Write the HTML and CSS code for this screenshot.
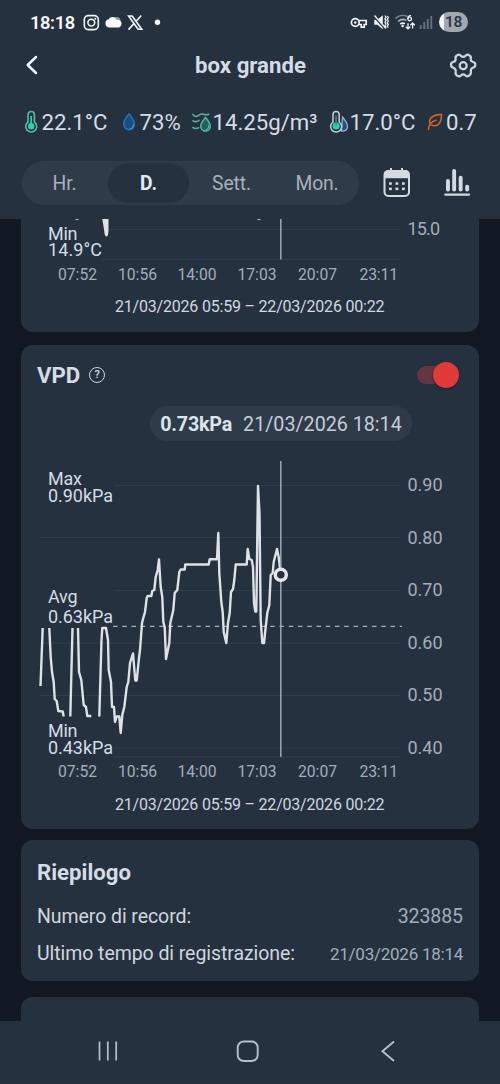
FILE: index.html
```html
<!DOCTYPE html>
<html lang="it">
<head>
<meta charset="utf-8">
<title>box grande</title>
<link rel="stylesheet" href="styles.css">
</head>
<body>
<div class="screen">
  <header class="top">
    <div class="status">
      <span class="clock">18:18</span>
      <svg class="status-left" width="82" height="20" viewBox="82 12 82 20">
        <g fill="none" stroke="#f1f4f8" stroke-width="1.6"><rect x="84.3" y="15.6" width="14" height="14" rx="4"/><circle cx="91.3" cy="22.6" r="3.4"/></g>
        <circle cx="95.3" cy="18.7" r="1" fill="#f1f4f8"/>
        <circle cx="116.5" cy="21" r="4" fill="#939ba6"/>
        <path d="M109 27.6a4.3 4.3 0 0 1-.4-8.400a4.600 4.600 0 0 1 8.200.7a3.900 3.900 0 1 1 .7 7.700z" fill="#f7f9fb"/>
        <g fill="none" stroke="#f1f4f8" stroke-width="1.6"><path d="M128.600 16h3.600l9.500 13.300h-3.600z"/><path d="M141.300 15.500l-5.600 6.200M133.900 23.600l-5.400 6"/></g>
        <circle cx="157.500" cy="22.300" r="2.700" fill="#f7f9fb"/>
      </svg>
      <svg class="status-right" width="86" height="22" viewBox="348 11 86 22">
        <g fill="none" stroke="#f1f4f8" stroke-width="1.700"><circle cx="355.300" cy="22.500" r="3.900"/><path d="M359 20.500h7.200v4h-2v2.600h-3v-2.600h-2.200"/></g><circle cx="355.300" cy="22.500" r="1.300" fill="#f1f4f8"/>
        <path d="M374.300 19.800h3.200l5.300-4.600v14l-5.300-4.400h-3.200z" fill="#f1f4f8"/><path d="M373.500 15.500l12 13.500" stroke="#263140" stroke-width="2.500"/><path d="M374.500 15.500l11.500 13" stroke="#f1f4f8" stroke-width="1.300"/>
        <path d="M384.800 15.500l1.300 1.700-1.300 1.700 1.300 1.700-1.300 1.700 1.300 1.700-1.300 1.700 1.300 2M387.200 16l1.200 1.600-1.200 1.700 1.200 1.700-1.200 1.700 1.200 1.700-1.200 1.700 1 1.600" fill="none" stroke="#f1f4f8" stroke-width="1.200"/>
        <g fill="none" stroke-width="1.600"><path d="M395.500 18.500c3.500-3.400 8.500-3.800 12.200-1.800" stroke="#778190"/><path d="M398 21.500c2.700-2.300 5.700-2.500 8.300-1.300" stroke="#aab2bd"/><path d="M400.300 24c1.400-1 3-1.200 4.600-.3" stroke="#f1f4f8"/></g>
        <circle cx="402.600" cy="26" r="1.300" fill="#f1f4f8"/>
        <g fill="none" stroke="#f1f4f8" stroke-width="1.300"><circle cx="409.700" cy="19" r="1.800"/><path d="M411 15.700c-2-.4-3.100 1-3.100 3.300M408 23.300v5.500M405.800 26.700l2.200 2.200 2.200-2.200M412.600 28.500V23M410.400 25.200l2.200-2.200 2.200 2.200"/></g>
        <g fill="#647080"><rect x="419.800" y="25" width="1.900" height="4"/><rect x="423.300" y="22" width="1.900" height="7"/><rect x="426.800" y="19" width="1.900" height="10"/><rect x="430.300" y="16" width="1.900" height="13"/></g>
      </svg>
      <span class="battery">18</span>
    </div>

    <div class="titlebar">
      <svg class="back" width="20" height="26" viewBox="22 53 20 26"><path d="M36 57l-8.300 8 8.300 8" fill="none" stroke="#f3f6fa" stroke-width="2.500" stroke-linecap="round" stroke-linejoin="round"/></svg>
      <h1 class="title">box grande</h1>
      <svg class="gear" width="30" height="30" viewBox="448 51 30 30">
        <path d="M456.900 54.800Q459.100 53 460.900 55.100Q463.200 57 465.500 55.100Q467.300 53 469.400 54.800Q471.400 55.800 470.700 58Q470.500 60.700 473 61.300Q475.500 61.800 475.300 64Q475.300 66.500 472.900 67Q470.300 68 470.900 70.900Q471.500 73.500 468.900 75Q466.700 76.500 465.200 74.500Q463.200 72.700 461.200 74.500Q459.400 76.500 457.300 75Q455 73.700 455.700 71Q456.100 68 453.300 67Q450.900 66.500 451 64Q450.900 61.800 453.300 61.300Q456 60.700 455.600 58Q455 55.800 456.900 54.800Z" fill="none" stroke="#cdd5df" stroke-width="2.200" stroke-linejoin="round" transform="translate(0 .7)"/>
        <circle cx="463.200" cy="65.700" r="3.500" fill="none" stroke="#cdd5df" stroke-width="2.200"/>
      </svg>
    </div>

    <div class="metrics">
      <div class="metric m-temp">
        <svg width="16" height="24" viewBox="23 109 16 24"><path d="M28 121v-7.300a3.200 3.200 0 0 1 6.400 0v7.300a5.500 5.500 0 1 1-6.400 0z" fill="none" stroke="#5bb7a4" stroke-width="1.600"/><circle cx="31.200" cy="125.200" r="3.200" fill="#26d3aa"/><path d="M31.200 115v10" stroke="#26d3aa" stroke-width="1.700"/></svg>
        <span>22.1°C</span>
      </div>
      <div class="metric m-hum">
        <svg width="16" height="24" viewBox="121 109 16 24"><path d="M129 113c2.800 3.600 5.300 6.600 5.300 10a5.300 5.600 0 0 1-10.600 0c0-3.400 2.500-6.400 5.300-10z" fill="#1c4d7e" stroke="#2272ba" stroke-width="1.600"/><path d="M130 128.200q3.500-.8 3.700-4.800" fill="none" stroke="#43a0ee"/></svg>
        <span>73%</span>
      </div>
      <div class="metric m-abs">
        <svg width="20" height="24" viewBox="192 109 20 24"><g fill="none" stroke="#58ad9b" stroke-width="1.600" stroke-linecap="round"><path d="M193 113.500c3 4.500 5 .5 8-.2c3-.9 4.500 1.700 7.700-.1M193 119.800c2.800 2 4.500.5 6-.5M193 126.500c2.800 2 4 .8 5.500.2"/><path d="M205.500 116.500c2.500 3.200 4.800 5.600 4.800 8.700a4.800 4.900 0 0 1-9.600 0c0-3.100 2.300-5.500 4.800-8.700z" fill="#255e60"/></g><path d="M205.700 129q3.200-.5 3.300-5" stroke="#2fddb2" fill="none"/></svg>
        <span>14.25g/m³</span>
      </div>
      <div class="metric m-dew">
        <svg width="20" height="24" viewBox="329 109 20 24"><path d="M342.500 116c3 3.600 5 6.200 5 9.200c0 3.500-2.500 5-6 5z" fill="#294e82" stroke="#9fb5ce" stroke-width="1.200"/><path d="M333 121v-7.300a3.100 3.100 0 0 1 6.200 0v7.300a5.500 5.500 0 1 1-6.200 0z" fill="#263140" stroke="#c4d0d8" stroke-width="1.500"/><circle cx="336.100" cy="125" r="3.600" fill="#26d3aa"/><path d="M336.100 114.500v10" stroke="#438f86" stroke-width="1.500"/></svg>
        <span>17.0°C</span>
      </div>
      <div class="metric m-vpd">
        <svg width="18" height="24" viewBox="428 109 18 24"><path d="M429.500 128.500c.3-5.300 2.800-8 7.500-9.300M431.500 124c-3-6 2-10.700 11-10.400c.1 7.500-3 12.700-9.600 10.700" fill="none" stroke="#cd632b" stroke-width="1.600" stroke-linecap="round"/></svg>
        <span>0.7</span>
      </div>
    </div>

    <div class="controls">
      <nav class="tabs">
        <span class="tab">Hr.</span><span class="tab active">D.</span><span class="tab">Sett.</span><span class="tab">Mon.</span>
      </nav>
      <svg class="cal" width="30" height="32" viewBox="382 167 30 32"><path d="M391 168v3M402 168v3" stroke="#d4dae2" stroke-width="2"/><rect x="384.500" y="171" width="24.500" height="25" rx="4" fill="none" stroke="#d4dae2" stroke-width="2"/><path d="M384 178.300v-4a4 4 0 0 1 4-4h17.500a4 4 0 0 1 4 4v4z" fill="#d4dae2"/><g fill="#d4dae2"><rect x="389" y="182.300" width="2.800" height="2.500"/><rect x="395.500" y="182.300" width="2.800" height="2.500"/><rect x="402" y="182.300" width="2.800" height="2.500"/><rect x="389" y="187.600" width="2.800" height="2.500"/><rect x="395.500" y="187.600" width="2.800" height="2.500"/><rect x="402" y="187.600" width="2.800" height="2.500"/></g></svg>
      <svg class="bars" width="30" height="32" viewBox="442 167 30 32"><g fill="#d4dae2"><rect x="446" y="179" width="3.900" height="12.500" rx="1.900"/><rect x="452.200" y="169" width="3.900" height="22.500" rx="1.900"/><rect x="458.700" y="175.800" width="3.900" height="15.700" rx="1.900"/><rect x="465.200" y="184.800" width="3.900" height="6.700" rx="1.900"/><rect x="444.200" y="193.400" width="26" height="2.300" rx="1.100"/></g></svg>
    </div>
  </header>

  <main class="content">
    <section class="card card-prev">
      <svg class="chart" width="458" height="113" viewBox="21 219 458 113">
        <path class="grid" d="M106 229.500H400M102 259.500H400"/>
        <path d="M102.300 219h6.200v10q0 7.500-2 7.500t-2.300-6z" fill="#dfe3e8"/>
        <path d="M75.500 219.300h3M257.500 219.300h3" stroke="#dfe3e8"/>
        <path class="cursor" d="M280.800 219v40.500"/>
        <g class="stat"><text x="48" y="239.500" textLength="29.500">Min</text><text x="48" y="256" textLength="54">14.9°C</text></g>
        <text class="ylab" x="407.500" y="235.200" textLength="32.500">15.0</text>
        <g class="xlab"><text x="58" y="279.500" textLength="39">07:52</text><text x="118" y="279.500" textLength="39">10:56</text><text x="177.500" y="279.500" textLength="39">14:00</text><text x="237.500" y="279.500" textLength="39">17:03</text><text x="298" y="279.500" textLength="39">20:07</text><text x="359.500" y="279.500" textLength="38.500">23:11</text></g>
        <text class="range" x="115" y="312" textLength="269.500">21/03/2026 05:59 – 22/03/2026 00:22</text>
      </svg>
    </section>

    <section class="card card-vpd">
      <div class="card-head">
        <h2 class="card-title">VPD</h2>
        <span class="help">?</span>
        <span class="switch"><span class="knob"></span></span>
      </div>
      <div class="reading"><b>0.73kPa</b><span>21/03/2026 18:14</span></div>
      <svg class="chart" width="458" height="388" viewBox="21 441 458 388">
        <path class="grid" d="M114 485.500H400M40 537.500H400M115 590.500H400M40 643H400M40 695.500H400M114 748H400M114 757H400"/>
        <path class="average" d="M113 626.300H402"/>
        <path class="series" d="M40.500 686L42.700 628M49.300 628L50.700 657 52 672 53.700 682 54.700 699 56.700 701 58.300 711 62.700 711.500 63.700 716.500M70.300 716.500L72.500 628M78 628L79 672 81.300 680 83 698 83.700 705 86 707 87.300 716 91.300 716M99.300 716.500L101.500 640 102.300 628H106L108 640 108.700 670 111 682 112 707 114 707 115 722 116.700 716.500H119.300L120.700 733 122.300 715 124.300 707 126.700 687 128.300 682 130 663 133 653.500 135.300 680.500H136.700L139 658 140 650 142 623 143.300 618 145 612 146.700 598 147.700 596H151.300L152.300 591 154.300 590 155.700 577 157.700 570 159 559.500 160.700 587 162.300 597 163.300 622 164.700 627 166 659 169.300 643 170.300 623 173.300 610 174.700 593 177.300 590 179.300 572 180.700 569.500H184.700L185.300 564.500H208.700L209.700 559.300H217L218.300 533 219.300 573 221.300 602 222.700 612 223.700 632 226.300 643 228 623 229.700 613 231 592 233 589 234.300 580 235.700 564.500H246.700L247.700 549 249.300 559 251.700 560 253 567 254 603 255.300 611.500H256.300L258 486 259.500 513 260.700 620 262.300 643H264L265.700 627 267.300 613 269.300 605 270.700 575 272.700 573 273.700 562 277 549 278.700 557 280.500 573"/>
        <path class="cursor" d="M280.800 461V757"/>
        <circle cx="280.800" cy="574.800" r="5.500" fill="#263140" stroke="#e4e7ec" stroke-width="3.500"/>
        <g class="stat"><text x="48" y="485" textLength="34">Max</text><text x="48" y="501.500" textLength="65">0.90kPa</text><text x="48" y="603" textLength="29.500">Avg</text><text x="48" y="622.500" textLength="65">0.63kPa</text><text x="48" y="736.500" textLength="29.500">Min</text><text x="48" y="753.500" textLength="65">0.43kPa</text></g>
        <g class="ylab"><text x="407.500" y="491" textLength="35">0.90</text><text x="407.500" y="543.500" textLength="35">0.80</text><text x="407.500" y="596" textLength="35">0.70</text><text x="407.500" y="648.700" textLength="35">0.60</text><text x="407.500" y="701" textLength="35">0.50</text><text x="407.500" y="753.800" textLength="35">0.40</text></g>
        <g class="xlab"><text x="58" y="777" textLength="39">07:52</text><text x="118" y="777" textLength="39">10:56</text><text x="177.500" y="777" textLength="39">14:00</text><text x="237.500" y="777" textLength="39">17:03</text><text x="298" y="777" textLength="39">20:07</text><text x="359.500" y="777" textLength="38.500">23:11</text></g>
        <text class="range" x="115" y="809.500" textLength="269.500">21/03/2026 05:59 – 22/03/2026 00:22</text>
      </svg>
    </section>

    <section class="card card-summary">
      <h2 class="card-title">Riepilogo</h2>
      <div class="row"><span>Numero di record:</span><span class="value">323885</span></div>
      <div class="row"><span>Ultimo tempo di registrazione:</span><span class="value small">21/03/2026 18:14</span></div>
    </section>

    <section class="card card-next"></section>
  </main>

  <footer class="navbar">
    <svg width="24" height="24" viewBox="96 1039 24 24"><path d="M99.500 1041.500v19M107.800 1041.500v19M116.200 1041.500v19" stroke="#b6bfcd" stroke-width="1.700"/></svg>
    <svg width="26" height="26" viewBox="235 1038 26 26"><rect x="237.700" y="1041.500" width="20" height="19.500" rx="6" fill="none" stroke="#b6bfcd" stroke-width="1.900"/></svg>
    <svg width="24" height="24" viewBox="376 1039 24 24"><path d="M394 1041.500l-11.500 9.700 11.500 9.700" fill="none" stroke="#b6bfcd" stroke-width="1.900"/></svg>
  </footer>
</div>
</body>
</html>
```
FILE: styles.css
```css
* { box-sizing: border-box; }
body { margin: 0; background: #111823; font-family: Roboto, "Liberation Sans", sans-serif; color: #d5dce5; }
h1, h2 { margin: 0; font-weight: 700; }
svg { display: block; flex: none; }
.screen { width: 500px; height: 1084px; display: flex; flex-direction: column; overflow: hidden; }

.top { height: 219px; flex: none; background: #263140; }
.status { height: 44px; display: flex; align-items: center; padding: 0 32px 0 30px; }
.clock { width: 52px; font-size: 18.300px; font-weight: 600; letter-spacing: -0.400px; color: #f7f9fb; white-space: nowrap; }
.status-right { margin-left: auto; }
.battery { width: 29px; height: 20px; margin-left: 5px; border-radius: 10px; background: linear-gradient(90deg, #f1f3f5 0 5px, #a2a8b1 5px); color: #2d3746; font-size: 15.500px; font-weight: 600; letter-spacing: -0.400px; line-height: 20px; text-align: center; }
.titlebar { height: 44px; display: flex; align-items: center; padding: 0 22px; }
.title { flex: 1; text-align: center; font-size: 22.200px; line-height: 26px; padding: 0 0 2px 11px; }
.metrics { height: 68px; margin: 0 21px 0 22.500px; display: flex; align-items: center; overflow: hidden; font-size: 22.200px; white-space: nowrap; }
.metric { display: flex; align-items: center; flex: none; }
.m-temp { width: 98px; }
.m-hum { width: 71px; }
.m-abs { width: 137px; }
.m-dew { width: 98.500px; }
.metric svg { margin-right: 3px; }
.m-abs svg, .m-dew svg { margin-right: 1px; }
.m-vpd svg { margin-right: 1px; }
.controls { height: 54px; padding: 0 28px 0 22px; display: flex; align-items: center; }
.tabs { width: 337px; height: 44px; padding: 2px 1px; border-radius: 22px; background: #303b4a; display: grid; grid-template-columns: 85px 81px 87px 82px; }
.tab { display: flex; align-items: center; justify-content: center; border-radius: 20px; font-size: 19.300px; letter-spacing: -0.100px; padding-right: 2px; color: #a7b0bc; }
.tab:last-child { padding-right: 0; }
.tab.active { background: #263140; color: #e4e9ef; font-weight: 700; padding: 0; }
.cal { margin-left: 23px; }
.bars { margin-left: 30px; }

.content { height: 802px; flex: none; padding: 0 21px; overflow: hidden; }
.card { background: #263140; border-radius: 12px; overflow: hidden; }
.card-prev { height: 113px; border-radius: 0 0 12px 12px; }
.card-vpd { height: 484px; margin-top: 13px; }
.card-head { height: 61px; padding: 0 20px 1px 16px; display: flex; align-items: center; }
.card-title { font-size: 22.200px; line-height: 26px; }
.help { width: 16px; height: 16px; margin-left: 9px; border: 1.500px solid #cbd3dd; border-radius: 50%; font-size: 11px; font-weight: 500; line-height: 14px; text-align: center; }
.switch { width: 42px; height: 18px; margin-left: auto; border-radius: 9px; background: #633642; display: flex; align-items: center; justify-content: flex-end; }
.knob { width: 26px; height: 26px; border-radius: 50%; background: #e03a3b; box-shadow: 0 1px 2px #17202c; flex: none; }
.reading { width: 262px; height: 35px; margin-left: 129px; padding-top: 1px; border-radius: 18px; background: #303b4a; display: flex; align-items: center; justify-content: center; gap: 11px; font-size: 19.700px; color: #c5cdd7; white-space: nowrap; }
.reading b { color: #dee4eb; letter-spacing: -0.200px; }
.chart { font-family: Roboto, "Liberation Sans", sans-serif; }
.grid { stroke: #323c4a; stroke-width: 1; fill: none; }
.average { stroke: #a5aeb9; stroke-width: 1.200; stroke-dasharray: 4.500 4.750; }
.series { fill: none; stroke: #dde2e8; stroke-width: 2.400; stroke-linejoin: round; }
.cursor { stroke: #a5aeba; stroke-width: 1.400; }
.stat { fill: #d5dce5; font-size: 18px; }
.ylab { fill: #a3adb9; font-size: 18px; }
.xlab { fill: #a3adb9; font-size: 15.700px; }
.range { fill: #d0d7e0; font-size: 16px; }

.card-summary { height: 141px; margin-top: 11px; padding: 19px 16px 0; }
.row { display: flex; align-items: center; justify-content: space-between; height: 37px; font-size: 19.500px; letter-spacing: -0.070px; color: #ced6df; white-space: nowrap; }
.card-summary .card-title + .row { margin-top: 13px; }
.value { color: #a3adb9; }
.value.small { font-size: 17px; letter-spacing: -0.250px; }
.card-next { height: 60px; margin-top: 16px; }

.navbar { height: 63px; flex: none; background: #263140; display: flex; align-items: center; justify-content: space-between; padding: 0 100px 3px 96px; }
```
